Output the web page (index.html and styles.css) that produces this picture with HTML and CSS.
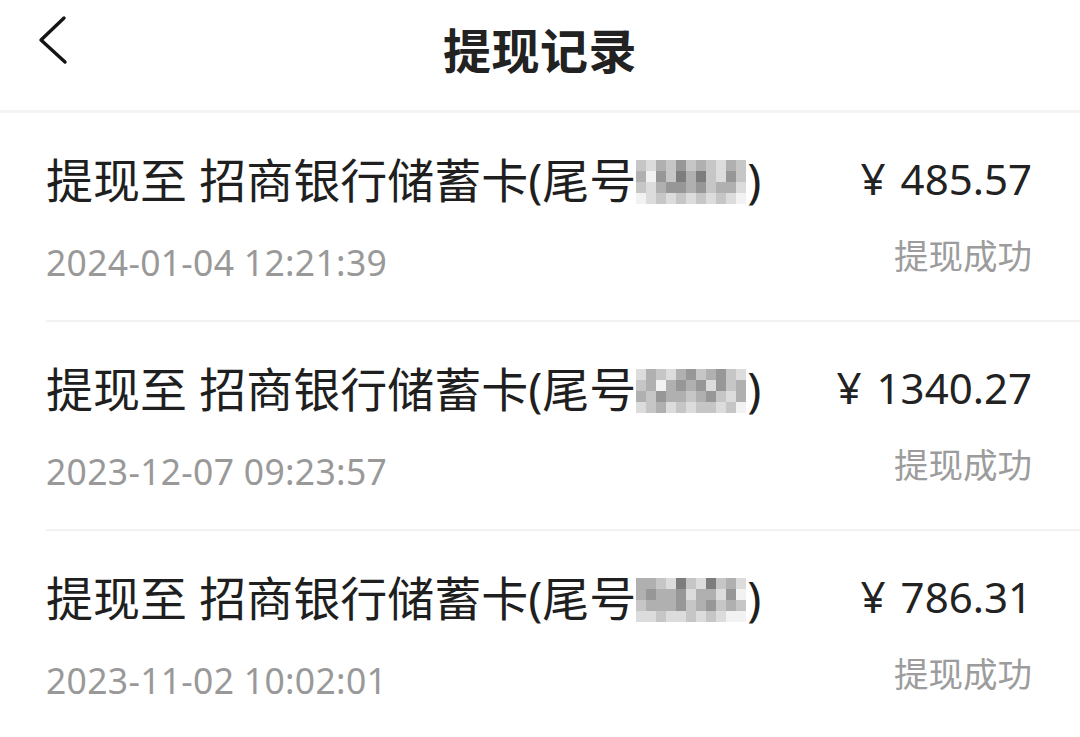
FILE: index.html
```html
<!DOCTYPE html>
<html lang="zh-CN">
<head>
<meta charset="utf-8">
<title>提现记录</title>
<link rel="stylesheet" href="styles.css">
</head>
<body>
<div class="page">
  <header class="topbar">
    <div class="back">
      <svg width="34" height="52" viewBox="0 0 34 52" aria-hidden="true">
        <path d="M27 3 L4 25 L28 47" fill="none" stroke="#141414" stroke-width="3.4" stroke-linecap="round" stroke-linejoin="round"/>
      </svg>
    </div>
    <h1 class="title">提现记录</h1>
    <div class="spacer"></div>
  </header>

  <ul class="list">
    <li class="row">
      <div class="left">
        <div class="desc">提现至 招商银行储蓄卡(尾号<span class="mosaic"><i class="g4"></i><i class="g5"></i><i class="g3"></i><i class="g4"></i><i class="g2"></i><i class="g4"></i><i class="g3"></i><i class="g4"></i><i class="g5"></i><i class="g3"></i><i class="g4"></i><i class="g3"></i><i class="g6"></i><i class="g2"></i><i class="g4"></i><i class="g1"></i><i class="g3"></i><i class="g1"></i><i class="g4"></i><i class="g5"></i><i class="g2"></i><i class="g4"></i><i class="g4"></i><i class="g5"></i><i class="g3"></i><i class="g2"></i><i class="g2"></i><i class="g3"></i><i class="g2"></i><i class="g4"></i><i class="g3"></i><i class="g3"></i><i class="g5"></i><i class="g6"></i><i class="g5"></i><i class="g4"></i><i class="g5"></i><i class="g4"></i><i class="g5"></i><i class="g4"></i><i class="g5"></i><i class="g4"></i><i class="g5"></i><i class="g6"></i></span>)</div>
        <div class="time">2024-01-04 12:21:39</div>
      </div>
      <div class="right">
        <div class="amount"><span class="cur">¥</span>485.57</div>
        <div class="status">提现成功</div>
      </div>
    </li>
    <li class="row">
      <div class="left">
        <div class="desc">提现至 招商银行储蓄卡(尾号<span class="mosaic"><i class="g5"></i><i class="g3"></i><i class="g4"></i><i class="g5"></i><i class="g3"></i><i class="g2"></i><i class="g4"></i><i class="g3"></i><i class="g2"></i><i class="g4"></i><i class="g5"></i><i class="g4"></i><i class="g3"></i><i class="g6"></i><i class="g3"></i><i class="g2"></i><i class="g3"></i><i class="g2"></i><i class="g5"></i><i class="g2"></i><i class="g4"></i><i class="g3"></i><i class="g3"></i><i class="g4"></i><i class="g2"></i><i class="g3"></i><i class="g3"></i><i class="g4"></i><i class="g3"></i><i class="g2"></i><i class="g4"></i><i class="g5"></i><i class="g3"></i><i class="g5"></i><i class="g4"></i><i class="g3"></i><i class="g5"></i><i class="g4"></i><i class="g5"></i><i class="g4"></i><i class="g4"></i><i class="g5"></i><i class="g4"></i><i class="g6"></i></span>)</div>
        <div class="time">2023-12-07 09:23:57</div>
      </div>
      <div class="right">
        <div class="amount"><span class="cur">¥</span>1340.27</div>
        <div class="status">提现成功</div>
      </div>
    </li>
    <li class="row">
      <div class="left">
        <div class="desc">提现至 招商银行储蓄卡(尾号<span class="mosaic"><i class="g3"></i><i class="g3"></i><i class="g4"></i><i class="g5"></i><i class="g1"></i><i class="g4"></i><i class="g5"></i><i class="g1"></i><i class="g4"></i><i class="g3"></i><i class="g5"></i><i class="g3"></i><i class="g2"></i><i class="g3"></i><i class="g3"></i><i class="g2"></i><i class="g5"></i><i class="g3"></i><i class="g3"></i><i class="g5"></i><i class="g2"></i><i class="g6"></i><i class="g4"></i><i class="g3"></i><i class="g3"></i><i class="g3"></i><i class="g2"></i><i class="g4"></i><i class="g3"></i><i class="g2"></i><i class="g4"></i><i class="g3"></i><i class="g4"></i><i class="g5"></i><i class="g5"></i><i class="g4"></i><i class="g5"></i><i class="g5"></i><i class="g4"></i><i class="g5"></i><i class="g4"></i><i class="g5"></i><i class="g6"></i><i class="g6"></i></span>)</div>
        <div class="time">2023-11-02 10:02:01</div>
      </div>
      <div class="right">
        <div class="amount"><span class="cur">¥</span>786.31</div>
        <div class="status">提现成功</div>
      </div>
    </li>
  </ul>
</div>
</body>
</html>
```

FILE: styles.css
```css
* { box-sizing: border-box; }

html, body {
  margin: 0;
  padding: 0;
  background: #ffffff;
}

body {
  font-family: "Noto Sans", "Noto Sans CJK SC", sans-serif;
  color: #1e1e1e;
  width: 1080px;
  height: 737px;
  overflow: hidden;
}

.page {
  width: 1080px;
}

.topbar {
  height: 113px;
  display: grid;
  grid-template-columns: 1fr auto 1fr;
  align-items: start;
  border-bottom: 3px solid #f4f4f4;
}

.back {
  padding-left: 37px;
  padding-top: 15px;
  line-height: 0;
}

.title {
  margin: 0;
  padding-top: 16px;
  font-family: "Noto Sans CJK SC", sans-serif;
  font-size: 48px;
  font-weight: 700;
  line-height: 64px;
  color: #222222;
  letter-spacing: 0.5px;
}

.list {
  list-style: none;
  margin: 0;
  padding: 0;
}

.row {
  margin-left: 46px;
  padding-right: 48px;
  height: 209px;
  border-bottom: 2px solid #f2f2f2;
  display: flex;
  justify-content: space-between;
  align-items: flex-start;
  padding-top: 37px;
}

.row:last-child {
  border-bottom: none;
}

.left, .right {
  display: flex;
  flex-direction: column;
}

.right {
  align-items: flex-end;
}

.desc {
  font-size: 47px;
  line-height: 60px;
  color: #1f1f1f;
  white-space: nowrap;
  display: flex;
  align-items: center;
}

.time {
  margin-top: 29px;
  font-size: 35.5px;
  line-height: 46px;
  color: #999999;
  letter-spacing: 0.3px;
}

.amount {
  font-size: 42px;
  line-height: 56px;
  color: #222222;
  white-space: nowrap;
  display: flex;
  align-items: baseline;
}

.cur {
  font-size: 44px;
  margin-right: 15px;
}

.status {
  margin-top: 24px;
  font-family: "Noto Sans CJK SC", sans-serif;
  font-size: 34.5px;
  line-height: 46px;
  color: #9c9c9c;
}

.mosaic {
  display: inline-grid;
  grid-template-columns: repeat(11, 10px);
  grid-template-rows: repeat(4, 11px);
  margin: 4px 1px 0 0;
  filter: blur(0.7px);
}

.mosaic i {
  display: block;
}

.g1 { background: #7d7d7d; }
.g2 { background: #979797; }
.g3 { background: #b0b0b0; }
.g4 { background: #c6c6c6; }
.g5 { background: #dcdcdc; }
.g6 { background: #f2f2f2; }
```
